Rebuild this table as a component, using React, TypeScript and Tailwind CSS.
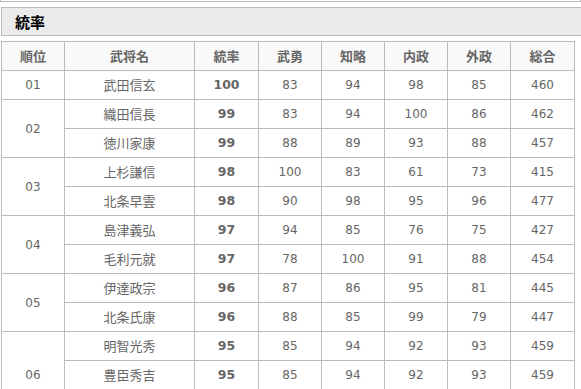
const rows = [
  { rank: "01", span: 1, name: "武田信玄", t: 100, b: 83, c: 94, n: 98, g: 85, s: 460 },
  { rank: "02", span: 2, name: "織田信長", t: 99, b: 83, c: 94, n: 100, g: 86, s: 462 },
  { rank: "", span: 0, name: "徳川家康", t: 99, b: 88, c: 89, n: 93, g: 88, s: 457 },
  { rank: "03", span: 2, name: "上杉謙信", t: 98, b: 100, c: 83, n: 61, g: 73, s: 415 },
  { rank: "", span: 0, name: "北条早雲", t: 98, b: 90, c: 98, n: 95, g: 96, s: 477 },
  { rank: "04", span: 2, name: "島津義弘", t: 97, b: 94, c: 85, n: 76, g: 75, s: 427 },
  { rank: "", span: 0, name: "毛利元就", t: 97, b: 78, c: 100, n: 91, g: 88, s: 454 },
  { rank: "05", span: 2, name: "伊達政宗", t: 96, b: 87, c: 86, n: 95, g: 81, s: 445 },
  { rank: "", span: 0, name: "北条氏康", t: 96, b: 88, c: 85, n: 99, g: 79, s: 447 },
  { rank: "06", span: 3, name: "明智光秀", t: 95, b: 85, c: 94, n: 92, g: 93, s: 459 },
  { rank: "", span: 0, name: "豊臣秀吉", t: 95, b: 85, c: 94, n: 92, g: 93, s: 459 },
  { rank: "", span: 0, name: "真田昌幸", t: 95, b: 86, c: 95, n: 84, g: 90, s: 450 },
];

const headers = ["順位", "武将名", "統率", "武勇", "知略", "内政", "外政", "総合"];
const widths = ["w-[63px]", "w-[130px]", "w-[64px]", "w-[63px]", "w-[63px]", "w-[63px]", "w-[63px]", "w-[64px]"];

const td = "border border-[#bbbbbb] text-center align-middle p-0";

export default function App() {
  return (
    <div className="w-[581px] h-[389px] overflow-hidden bg-white font-['DejaVu_Sans','Noto_Sans_CJK_JP',sans-serif] text-[#666666]">
      <div className="h-[2px] border-x border-b border-[#bbbbbb]"></div>
      <div className="mt-[5px] ml-px h-[29px] border border-r-0 border-[#bbbbbb] bg-[#ebebeb] pl-[13px] flex items-center">
        <span className="text-[15px] font-bold text-black font-['Noto_Sans_CJK_JP',sans-serif] leading-none">統率</span>
      </div>
      <table className="mt-[5px] ml-px w-[574px] table-fixed border-collapse">
        <colgroup>
          {widths.map((w, i) => (
            <col key={i} className={w} />
          ))}
        </colgroup>
        <thead>
          <tr className="h-[29px] bg-[#f9f9f9]">
            {headers.map((h) => (
              <th key={h} className={`${td} text-[13px] font-bold font-['Noto_Sans_CJK_JP',sans-serif]`}>
                {h}
              </th>
            ))}
          </tr>
        </thead>
        <tbody className="text-[12px]">
          {rows.map((r, i) => (
            <tr key={i} className="h-[29px]">
              {r.span > 0 && (
                <td rowSpan={r.span} className={td}>
                  {r.rank}
                </td>
              )}
              <td className={`${td} text-[13px] font-['Noto_Sans_CJK_JP',sans-serif]`}>{r.name}</td>
              <td className={`${td} font-bold text-[12.5px]`}>{r.t}</td>
              <td className={td}>{r.b}</td>
              <td className={td}>{r.c}</td>
              <td className={td}>{r.n}</td>
              <td className={td}>{r.g}</td>
              <td className={td}>{r.s}</td>
            </tr>
          ))}
        </tbody>
      </table>
    </div>
  );
}
